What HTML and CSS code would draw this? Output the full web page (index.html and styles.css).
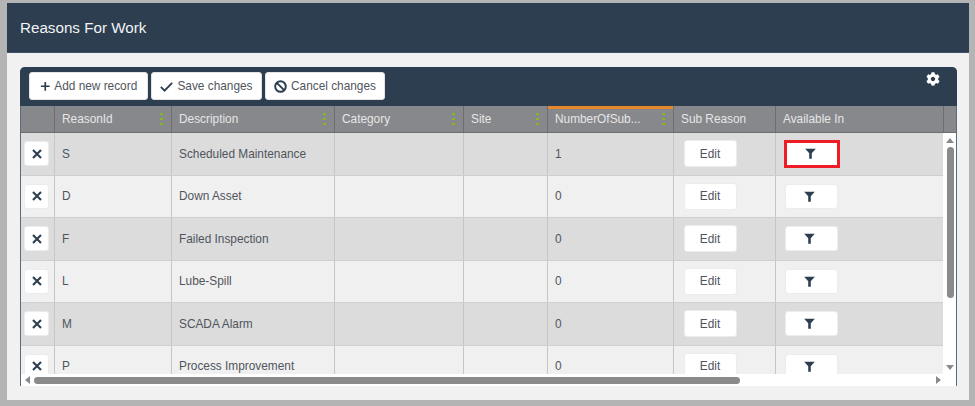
FILE: index.html
```html
<!DOCTYPE html>
<html lang="en">
<head>
<meta charset="utf-8">
<title>Reasons For Work</title>
<link rel="stylesheet" href="styles.css">
</head>
<body>
<svg class="defs" width="0" height="0" aria-hidden="true">
  <symbol id="i-x" viewBox="0 0 12 12"><path d="M2 2l8 8M10 2l-8 8" fill="none" stroke="currentColor" stroke-width="2.1"/></symbol>
  <symbol id="i-filter" viewBox="0 0 12 12"><path d="M.2 .8h11.6L7.4 5.8v5.8H4.6V5.8z" fill="currentColor"/></symbol>
</svg>
<main class="panel">
  <header class="panel-head"><h1 class="panel-title">Reasons For Work</h1></header>
  <section class="panel-body">
    <div class="grid">
      <div class="toolbar">
        <button class="tool-btn tool-add"><svg class="tool-icon icon-plus" viewBox="0 0 12 12"><path d="M6 1v10M1 6h10" fill="none" stroke="currentColor" stroke-width="1.9"/></svg>Add new record</button>
        <button class="tool-btn tool-save"><svg class="tool-icon icon-check" viewBox="0 0 12 12"><path d="M.8 6.4l3.4 3.4L11.2 2.6" fill="none" stroke="currentColor" stroke-width="1.7"/></svg>Save changes</button>
        <button class="tool-btn tool-cancel"><svg class="tool-icon icon-ban" viewBox="0 0 12 12"><circle cx="6" cy="6" r="4.9" fill="none" stroke="currentColor" stroke-width="1.8"/><path d="M2.6 2.6l6.8 6.8" stroke="currentColor" stroke-width="1.8"/></svg>Cancel changes</button>
        <svg class="gear" viewBox="0 0 512 512"><path fill="currentColor" d="M487.4 315.7l-42.6-24.6c4.3-23.2 4.3-47 0-70.2l42.6-24.6c4.9-2.8 7.1-8.6 5.5-14-11.1-35.6-30-67.8-54.7-94.6-3.8-4.1-10-5.1-14.8-2.3L380.8 110c-17.9-15.4-38.5-27.3-60.8-35.1V25.8c0-5.6-3.9-10.5-9.4-11.7-36.7-8.2-74.3-7.8-109.2 0-5.5 1.2-9.4 6.1-9.4 11.7V75c-22.2 7.9-42.8 19.8-60.8 35.1L88.7 85.5c-4.9-2.8-11-1.9-14.8 2.3-24.7 26.7-43.6 58.9-54.7 94.6-1.7 5.4.6 11.2 5.5 14L67.3 221c-4.3 23.2-4.3 47 0 70.2l-42.6 24.6c-4.9 2.8-7.1 8.6-5.5 14 11.1 35.6 30 67.8 54.7 94.6 3.8 4.1 10 5.1 14.8 2.3l42.6-24.6c17.9 15.4 38.5 27.3 60.8 35.1v49.2c0 5.6 3.9 10.5 9.4 11.7 36.7 8.2 74.3 7.8 109.2 0 5.5-1.2 9.4-6.1 9.4-11.7v-49.2c22.2-7.9 42.8-19.8 60.8-35.1l42.6 24.6c4.9 2.8 11 1.9 14.8-2.3 24.7-26.7 43.6-58.9 54.7-94.6 1.5-5.5-.7-11.3-5.6-14.1zM256 336c-44.1 0-80-35.9-80-80s35.9-80 80-80 80 35.9 80 80-35.9 80-80 80z"/></svg>
      </div>
      <div class="grid-head">
        <div class="th"></div>
        <div class="th">ReasonId<span class="dots"></span></div>
        <div class="th">Description<span class="dots"></span></div>
        <div class="th">Category<span class="dots"></span></div>
        <div class="th">Site<span class="dots"></span></div>
        <div class="th th-sorted">NumberOfSub...<span class="dots"></span></div>
        <div class="th">Sub Reason</div>
        <div class="th">Available In</div>
        <div class="th th-gutter"></div>
      </div>
      <div class="grid-main">
        <div class="rows">
          <div class="row"><div class="td"><button class="btn-del"><svg class="icon-x"><use href="#i-x"/></svg></button></div><div class="td">S</div><div class="td">Scheduled Maintenance</div><div class="td"></div><div class="td"></div><div class="td">1</div><div class="td"><button class="btn-edit">Edit</button></div><div class="td"><button class="btn-filter btn-marked"><svg class="icon-filter"><use href="#i-filter"/></svg></button></div></div>
          <div class="row"><div class="td"><button class="btn-del"><svg class="icon-x"><use href="#i-x"/></svg></button></div><div class="td">D</div><div class="td">Down Asset</div><div class="td"></div><div class="td"></div><div class="td">0</div><div class="td"><button class="btn-edit">Edit</button></div><div class="td"><button class="btn-filter"><svg class="icon-filter"><use href="#i-filter"/></svg></button></div></div>
          <div class="row"><div class="td"><button class="btn-del"><svg class="icon-x"><use href="#i-x"/></svg></button></div><div class="td">F</div><div class="td">Failed Inspection</div><div class="td"></div><div class="td"></div><div class="td">0</div><div class="td"><button class="btn-edit">Edit</button></div><div class="td"><button class="btn-filter"><svg class="icon-filter"><use href="#i-filter"/></svg></button></div></div>
          <div class="row"><div class="td"><button class="btn-del"><svg class="icon-x"><use href="#i-x"/></svg></button></div><div class="td">L</div><div class="td">Lube-Spill</div><div class="td"></div><div class="td"></div><div class="td">0</div><div class="td"><button class="btn-edit">Edit</button></div><div class="td"><button class="btn-filter"><svg class="icon-filter"><use href="#i-filter"/></svg></button></div></div>
          <div class="row"><div class="td"><button class="btn-del"><svg class="icon-x"><use href="#i-x"/></svg></button></div><div class="td">M</div><div class="td">SCADA Alarm</div><div class="td"></div><div class="td"></div><div class="td">0</div><div class="td"><button class="btn-edit">Edit</button></div><div class="td"><button class="btn-filter"><svg class="icon-filter"><use href="#i-filter"/></svg></button></div></div>
          <div class="row"><div class="td"><button class="btn-del"><svg class="icon-x"><use href="#i-x"/></svg></button></div><div class="td">P</div><div class="td">Process Improvement</div><div class="td"></div><div class="td"></div><div class="td">0</div><div class="td"><button class="btn-edit">Edit</button></div><div class="td"><button class="btn-filter"><svg class="icon-filter"><use href="#i-filter"/></svg></button></div></div>
        </div>
        <div class="vbar">
          <span class="arrow arrow-up"></span>
          <span class="vthumb"></span>
          <span class="arrow arrow-down"></span>
        </div>
      </div>
      <div class="hbar">
        <span class="arrow arrow-left"></span>
        <span class="hthumb"></span>
        <span class="arrow arrow-right"></span>
      </div>
    </div>
  </section>
</main>
</body>
</html>
```
FILE: styles.css
```css
* { box-sizing: border-box; }
html, body { height: 100%; }
body {
  margin: 0;
  padding: 3px 6px 6px 7px;
  background: #b4b4b4;
  font-family: "Liberation Sans", Arial, sans-serif;
  font-size: 11.85px;
  color: #50555c;
  overflow: hidden;
}
.defs { position: absolute; }
.panel {
  height: 397px;
  display: flex;
  flex-direction: column;
  background: #f1f1f1;
}
.panel-head {
  height: 50px;
  flex: none;
  display: flex;
  align-items: center;
  padding-left: 13px;
  background: #2c3e50;
  border-bottom: 1px solid #3f5064;
}
.panel-title {
  margin: 0;
  font-size: 15.2px;
  font-weight: 400;
  color: #f2f4f6;
}
.panel-body { padding: 14px 12px 0 13px; }
.grid {
  width: 937px;
  height: 319px;
  display: flex;
  flex-direction: column;
  background: #fff;
  border: 1px solid #5a6b7d;
  border-top: 0;
  border-radius: 5px 5px 0 0;
}
.toolbar {
  height: 38.5px;
  flex: none;
  margin: 0 -1px;
  display: flex;
  align-items: flex-start;
  gap: 3px;
  padding: 5px 9px 0;
  background: #2c3e50;
  border-radius: 5px 5px 0 0;
}
.tool-btn {
  height: 28px;
  display: flex;
  align-items: center;
  justify-content: center;
  gap: 4px;
  padding: 0;
  background: #fff;
  border: 1px solid #e4e4e4;
  border-radius: 3px;
  font: inherit;
  color: #50555c;
}
.tool-add { width: 119px; }
.tool-save { width: 111px; }
.tool-cancel { width: 120px; }
.tool-icon { flex: none; color: #2c3e50; }
.icon-plus { width: 10.5px; height: 10.5px; }
.icon-check { width: 13px; height: 13px; }
.icon-ban { width: 13px; height: 13px; }
.gear {
  width: 14px;
  height: 14px;
  margin: 0 8px 0 auto;
  color: #fff;
}
.grid-head,
.row {
  display: grid;
  grid-template-columns: 33px 117px 163px 129px 84px 126px 102px 168px 14px;
}
.grid-head {
  height: 27.5px;
  flex: none;
  background: #86888c;
  color: #e6e6e6;
}
.th {
  position: relative;
  display: flex;
  align-items: center;
  padding-left: 7px;
  border-left: 1px solid #6c6e72;
  border-bottom: 1px solid #6c6e72;
}
.th:first-child { border-left: 0; }
.th-sorted { box-shadow: inset 0 3px 0 #e8862a; }
.dots {
  position: absolute;
  right: 8px;
  top: 7.5px;
  width: 3px;
  height: 12px;
  background: repeating-linear-gradient(#84b81c 0 2px, transparent 2px 5px);
}
.grid-main {
  height: 241px;
  flex: none;
  display: flex;
  overflow: hidden;
}
.rows { width: 922px; flex: none; }
.row {
  height: 42.5px;
  grid-template-columns: 33px 117px 163px 129px 84px 126px 102px 168px;
  background: #f0f0f0;
  border-bottom: 1px solid #cfcfcf;
}
.row:nth-child(odd) { background: #dcdcdc; }
.td {
  display: flex;
  align-items: center;
  padding-left: 7px;
  border-left: 1px solid #c6c6c6;
}
.td:first-child { border-left: 0; padding-left: 3px; }
.td:nth-child(7) { padding-left: 9.5px; }
.td:nth-child(8) { padding-left: 9px; }
.btn-del,
.btn-edit,
.btn-filter {
  display: flex;
  align-items: center;
  justify-content: center;
  padding: 0;
  background: #fff;
  border: 1px solid #ececec;
  border-radius: 3px;
  font: inherit;
  color: #50555c;
}
.btn-del { width: 25px; height: 25px; }
.btn-edit { width: 53px; height: 27px; }
.btn-filter { width: 53px; height: 25px; padding-right: 4px; }
.btn-marked {
  width: 56px;
  height: 28px;
  margin-left: -1px;
  border: 3px solid #ee1c25;
  border-radius: 0;
}
.icon-x { width: 12px; height: 12px; color: #2c3e50; }
.icon-filter { width: 11px; height: 11px; color: #2c3e50; }
.vbar {
  width: 14px;
  flex: none;
  display: flex;
  flex-direction: column;
  align-items: center;
  padding: 5px 0 4px;
  background: #fff;
}
.vthumb {
  width: 7px;
  height: 151px;
  margin-top: 4px;
  background: #8a8a8a;
  border-radius: 4px;
}
.arrow { width: 0; height: 0; border: 4px solid transparent; }
.arrow-up { border-top: 0; border-bottom: 5px solid #8a8a8a; }
.arrow-down { margin-top: auto; border-bottom: 0; border-top: 5px solid #8a8a8a; }
.hbar {
  height: 12px;
  flex: none;
  display: flex;
  align-items: center;
  padding: 0 15px 0 4px;
  background: #fff;
}
.hthumb {
  width: 706px;
  height: 7px;
  margin-left: 4px;
  background: #8a8a8a;
  border-radius: 4px;
}
.arrow-left { border-left: 0; border-right: 5px solid #8a8a8a; }
.arrow-right { margin-left: auto; border-right: 0; border-left: 5px solid #8a8a8a; }
```
